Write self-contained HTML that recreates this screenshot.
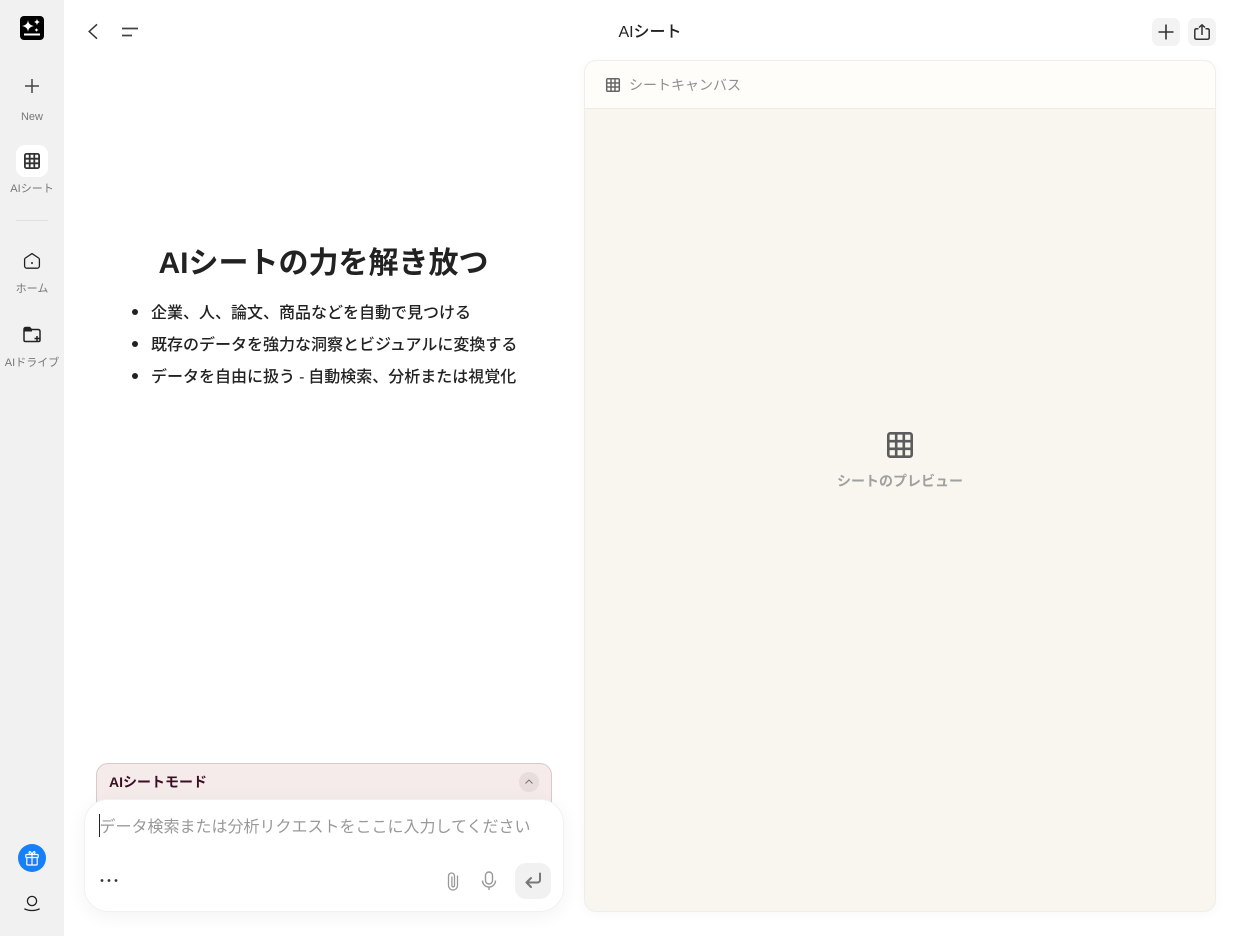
<!DOCTYPE html>
<html lang="ja">
<head>
<meta charset="utf-8">
<title>AIシート</title>
<style>
html,body{margin:0;padding:0;width:1236px;height:936px;overflow:hidden;background:#fff;}
body{font-family:"Liberation Sans","Noto Sans CJK JP",sans-serif;color:#222;position:relative;}
.a{position:absolute;}
.t{position:absolute;white-space:nowrap;line-height:1;}
.c{transform:translateX(-50%);}
svg{position:absolute;display:block;overflow:visible;}
</style>
</head>
<body>
<div class="a" style="left:0;top:0;width:64px;height:936px;background:#f1f1f1;"></div>

<!-- logo -->
<svg style="left:20px;top:16px" width="24" height="24" viewBox="0 0 24 24">
<rect width="24" height="24" rx="4" fill="#000"/>
<path d="M8 4C8.500 7.500 9.500 8.900 14 10 9.500 11.100 8.500 12.500 8 16 7.500 12.500 6.500 11.100 2 10 6.500 8.900 7.500 7.500 8 4z" fill="#fff"/>
<path d="M17 2.500C17.300 4.500 17.800 5.200 20 6 17.800 6.800 17.300 7.500 17 9.500 16.700 7.500 16.200 6.800 14 6 16.200 5.200 16.700 4.500 17 2.500z" fill="#fff"/>
<path d="M16.500 11.800C16.700 13 17 13.300 18.500 14 17 14.700 16.700 15 16.500 16.200 16.300 15 16 14.700 14.500 14 16 13.300 16.300 13 16.500 11.800z" fill="#fff"/>
<rect x="4" y="17.500" width="16" height="2" fill="#fff"/>
</svg>

<!-- New -->
<svg style="left:24px;top:78px" width="16" height="16" viewBox="0 0 16 16"><path d="M8 1v14M1 8h14" stroke="#444" stroke-width="1.500" fill="none"/></svg>
<div class="t c" style="left:32px;top:112px;font-size:11px;color:#777;">New</div>

<!-- AI sheet -->
<div class="a" style="left:16px;top:145px;width:32px;height:32px;border-radius:9px;background:#fff;"></div>
<svg style="left:24px;top:153px" width="16" height="16" viewBox="0 0 16 16"><g stroke="#333" stroke-width="1.800" fill="none"><rect x=".9" y=".9" width="14.200" height="14.200" rx="1.500"/><path d="M5.700 1v14M10.300 1v14M1 5.700h14M1 10.300h14"/></g></svg>
<div class="t c" style="left:32px;top:184px;font-size:11px;color:#777;">AIシート</div>

<div class="a" style="left:16px;top:220px;width:32px;height:1px;background:#e0e0e0;"></div>

<!-- home -->
<svg style="left:24px;top:253px" width="16" height="16" viewBox="0 0 16 16"><path d="M8 .6L14.600 5c.5.300.8.900.8 1.500V13c0 1.200-1 2.200-2.200 2.200H2.800C1.600 15.200.6 14.200.6 13V6.500c0-.6.300-1.200.8-1.500z" stroke="#222" stroke-width="1.300" fill="none" stroke-linejoin="round"/><circle cx="8" cy="10" r="1" fill="#222"/></svg>
<div class="t c" style="left:32px;top:284px;font-size:11px;color:#777;">ホーム</div>

<!-- drive -->
<svg style="left:23px;top:326px" width="18" height="17" viewBox="0 0 18 17">
<path d="M1 3.500C1 2 1.500 1.500 3 1.500h3.500L8.500 3.500H15c1.300 0 2 .7 2 2V14c0 1-.5 1.500-1.500 1.500h-13C1.500 15.500 1 15 1 14z" fill="none" stroke="#222" stroke-width="1.500"/>
<path d="M1 5.500V3c0-1 .5-1.500 1.500-1.500H6.500L9 4v1.500z" fill="#222"/>
<path d="M14 10v5M11.500 12.500h5" stroke="#222" stroke-width="1.500"/>
</svg>
<div class="t c" style="left:32px;top:358px;font-size:11px;color:#777;">AIドライブ</div>

<!-- gift -->
<div class="a" style="left:18px;top:844px;width:28px;height:28px;border-radius:50%;background:#1580f8;"></div>
<svg style="left:25px;top:850px" width="14" height="16" viewBox="0 0 14 16"><g stroke="#fff" stroke-width="1.200" fill="none" stroke-linejoin="round"><rect x=".8" y="4.500" width="12.400" height="3" rx=".8"/><path d="M1.800 7.500V14c0 .6.400 1 1 1h8.400c.6 0 1-.4 1-1V7.500M7 4.500V15"/><path d="M7 4.500C5.500 4.500 4 3.800 4 2.500 4 1.300 5.800.8 7 4.500c1.200-3.700 3-3.200 3-2 0 1.300-1.500 2-3 2z"/></g></svg>

<!-- user -->
<svg style="left:24px;top:896px" width="16" height="18" viewBox="0 0 16 18"><circle cx="8" cy="5" r="4.600" stroke="#222" stroke-width="1.300" fill="none"/><path d="M.8 13c4 2 10.400 2 14.400 0" stroke="#222" stroke-width="1.300" fill="none" stroke-linecap="round"/></svg>

<!-- header -->
<svg style="left:87px;top:23px" width="12" height="17" viewBox="0 0 12 17"><path d="M10 1.300L2.200 8.500l7.800 7.200" stroke="#333" stroke-width="1.500" fill="none"/></svg>
<svg style="left:122px;top:27px" width="16" height="10" viewBox="0 0 16 10"><path d="M0 1.500h16M0 8.500h10" stroke="#444" stroke-width="1.700" fill="none"/></svg>
<div class="t c" style="left:650px;top:25px;font-size:16px;font-weight:500;color:#222;">AIシート</div>

<div class="a" style="left:1152px;top:18px;width:28px;height:28px;border-radius:7px;background:#f3f3f3;"></div>
<svg style="left:1158px;top:24px" width="16" height="16" viewBox="0 0 16 16"><path d="M8 .5v15M.5 8h15" stroke="#333" stroke-width="1.600" fill="none"/></svg>
<div class="a" style="left:1188px;top:18px;width:28px;height:28px;border-radius:7px;background:#f3f3f3;"></div>
<svg style="left:1194px;top:24px" width="16" height="16" viewBox="0 0 16 16"><path d="M4.500 4.700H2.500C1.300 4.700.8 5.300.8 6.500v7c0 1.200.6 1.700 1.700 1.700h11c1.200 0 1.700-.5 1.700-1.700v-7c0-1.200-.5-1.800-1.700-1.800h-2M8 11V.8M5 3.500L8 .8l3 2.700" stroke="#333" stroke-width="1.500" fill="none" stroke-linejoin="round"/></svg>

<!-- main text -->
<div class="t c" style="left:323.500px;top:249px;font-size:30px;font-weight:700;color:#222;">AIシートの力を解き放つ</div>
<div class="a" style="left:132px;top:309px;width:6px;height:6px;border-radius:50%;background:#222;"></div>
<div class="a" style="left:132px;top:341px;width:6px;height:6px;border-radius:50%;background:#222;"></div>
<div class="a" style="left:132px;top:373px;width:6px;height:6px;border-radius:50%;background:#222;"></div>
<div class="t" style="left:151px;top:306px;font-size:16px;font-weight:500;color:#222;">企業、人、論文、商品などを自動で見つける</div>
<div class="t" style="left:151px;top:338px;font-size:16px;font-weight:500;color:#222;">既存のデータを強力な洞察とビジュアルに変換する</div>
<div class="t" style="left:151px;top:370px;font-size:16px;font-weight:500;color:#222;">データを自由に扱う<span style="letter-spacing:-.35px"> - </span>自動検索、分析または視覚化</div>

<!-- mode panel -->
<div class="a" style="left:96px;top:763px;width:454px;height:60px;border:1px solid #d9c9c9;border-radius:12px;background:#f5ebea;box-sizing:content-box;"></div>
<div class="t" style="left:109px;top:775px;font-size:14px;font-weight:700;color:#3a0f24;">AIシートモード</div>
<div class="a" style="left:519px;top:772px;width:20px;height:20px;border-radius:50%;background:#e8dcdc;"></div>
<svg style="left:525px;top:779px" width="8" height="5" viewBox="0 0 8 5"><path d="M.5 4.500L4 1l3.500 3.500" stroke="#777" stroke-width="1" fill="none"/></svg>

<!-- input -->
<div class="a" style="left:84px;top:799px;width:480px;height:113px;box-sizing:border-box;border-radius:24px;background:#fff;border:1px solid #f1f1f1;box-shadow:0 4px 20px rgba(0,0,0,.05);"></div>
<div class="a" style="left:99px;top:814px;width:1px;height:23px;background:#222;"></div>
<div class="t" style="left:99.500px;top:820px;font-size:16px;color:#999;">データ検索または分析リクエストをここに入力してください</div>
<svg style="left:100px;top:878px" width="18" height="5" viewBox="0 0 18 5"><circle cx="2" cy="2.500" r="1.400" fill="#333"/><circle cx="9" cy="2.500" r="1.400" fill="#333"/><circle cx="16" cy="2.500" r="1.400" fill="#333"/></svg>
<svg style="left:447px;top:871px" width="12" height="20" viewBox="0 0 12 20"><path d="M10.500 5v9.500a4.500 4.500 0 0 1-9 0V5a3 3 0 0 1 6 0v9.500a1.300 1.300 0 0 1-2.600 0V6" stroke="#999" stroke-width="1.300" fill="none" stroke-linecap="round"/></svg>
<svg style="left:481px;top:871px" width="16" height="20" viewBox="0 0 16 20"><rect x="4.500" y="1" width="7" height="12" rx="3.500" stroke="#999" stroke-width="1.400" fill="none"/><path d="M1.500 9.500a6.500 6.500 0 0 0 13 0M8 16v3" stroke="#999" stroke-width="1.400" fill="none"/></svg>
<div class="a" style="left:515px;top:863px;width:36px;height:36px;border-radius:11px;background:#f1f1f1;"></div>
<svg style="left:524px;top:872px" width="18" height="17" viewBox="0 0 18 17"><path d="M16 1.500v6.500c0 1.500-1 2.500-2.500 2.500H2.500M7 6L2.500 10.500 7 15" stroke="#777" stroke-width="2" fill="none" stroke-linecap="round" stroke-linejoin="round"/></svg>

<!-- canvas -->
<div class="a" style="left:584px;top:60px;width:632px;height:852px;box-sizing:border-box;border:1px solid #eeeeea;border-radius:12px;background:#f9f6ef;box-shadow:0 2px 12px rgba(0,0,0,.03);overflow:hidden;">
  <div style="height:47px;background:#fefdf9;border-bottom:1px solid #eeebe3;"></div>
</div>
<svg style="left:606px;top:78px" width="14" height="14" viewBox="0 0 14 14"><g stroke="#666" stroke-width="1.500" fill="none"><rect x=".7" y=".7" width="12.600" height="12.600" rx="1.200"/><path d="M5 1v12M9 1v12M1 5h12M1 9h12"/></g></svg>
<div class="t" style="left:629px;top:78px;font-size:14px;color:#8f8f8f;">シートキャンバス</div>
<svg style="left:887px;top:432px" width="26" height="26" viewBox="0 0 26 26"><g stroke="#5c5c5c" stroke-width="2.600" fill="none"><rect x="1.300" y="1.300" width="23.400" height="23.400" rx="2"/><path d="M9.200 1v24M16.800 1v24M1 9.200h24M1 16.800h24"/></g></svg>
<div class="t c" style="left:900px;top:474px;font-size:14px;font-weight:700;color:#a0a0a0;">シートのプレビュー</div>
</body>
</html>
